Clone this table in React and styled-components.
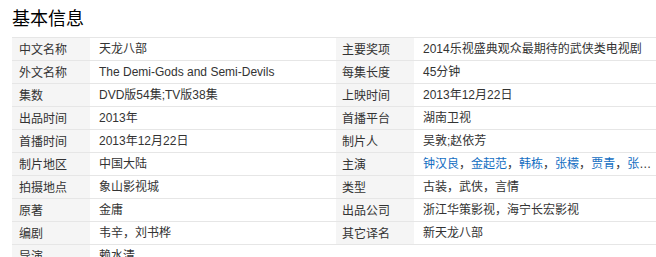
import React from "react";
import styled, { createGlobalStyle } from "styled-components";

const Global = createGlobalStyle`
  html, body { margin: 0; padding: 0; background: #fff; overflow: hidden; }
  body { font-family: "Liberation Sans", Arial, "Noto Sans CJK SC", sans-serif; color: #333; }
`;

const Page = styled.div`
  padding-left: 12px;
  width: 648px;
`;

const Title = styled.h2`
  margin: 0;
  height: 37px;
  line-height: 35px;
  font-size: 18px;
  font-weight: normal;
  color: #000;
  font-family: "Noto Sans CJK SC", sans-serif;
`;

const Table = styled.div`
  display: grid;
  grid-template-columns: 324px 324px;
  align-items: start;
`;

const Column = styled.dl`
  margin: 0;
  border-top: 1px solid #e6e6e6;
`;

const Row = styled.div`
  display: grid;
  grid-template-columns: 78px 1fr;
  height: 22px;
  border-bottom: 1px solid #e6e6e6;
  font-size: 12px;
  line-height: 22px;
`;

const Label = styled.dt`
  margin: 0;
  background: #f5f5f5;
  padding-left: ${(p) => p.$pad}px;
  color: #333;
  font-family: "Noto Sans CJK SC", sans-serif;
`;

const Value = styled.dd`
  margin: 0;
  padding-left: 9px;
  padding-right: 6px;
  white-space: nowrap;
  overflow: hidden;
  text-overflow: ellipsis;
  color: #333;
`;

const Link = styled.a`
  color: #136ec2;
  text-decoration: none;
`;

const left = [
  ["中文名称", "天龙八部"],
  ["外文名称", "The Demi-Gods and Semi-Devils"],
  ["集数", "DVD版54集;TV版38集"],
  ["出品时间", "2013年"],
  ["首播时间", "2013年12月22日"],
  ["制片地区", "中国大陆"],
  ["拍摄地点", "象山影视城"],
  ["原著", "金庸"],
  ["编剧", "韦辛，刘书桦"],
  ["导演", "赖水清"],
];

const actors = ["钟汉良", "金起范", "韩栋", "张檬", "贾青", "张萌", "陈好"];

const right = [
  ["主要奖项", "2014乐视盛典观众最期待的武侠类电视剧"],
  ["每集长度", "45分钟"],
  ["上映时间", "2013年12月22日"],
  ["首播平台", "湖南卫视"],
  ["制片人", "吴敦;赵依芳"],
  ["主演", null],
  ["类型", "古装，武侠，言情"],
  ["出品公司", "浙江华策影视，海宁长宏影视"],
  ["其它译名", "新天龙八部"],
];

export default function App() {
  return (
    <Page>
      <Global />
      <Title>基本信息</Title>
      <Table>
        <Column>
          {left.map(([k, v]) => (
            <Row key={k}>
              <Label $pad={7}>{k}</Label>
              <Value>{v}</Value>
            </Row>
          ))}
        </Column>
        <Column>
          {right.map(([k, v]) => (
            <Row key={k}>
              <Label $pad={6}>{k}</Label>
              <Value>
                {v === null
                  ? actors.map((a, i) => (
                      <React.Fragment key={a}>
                        <Link href="#">{a}</Link>
                        {i < actors.length - 1 ? "，" : ""}
                      </React.Fragment>
                    ))
                  : v}
              </Value>
            </Row>
          ))}
        </Column>
      </Table>
    </Page>
  );
}
